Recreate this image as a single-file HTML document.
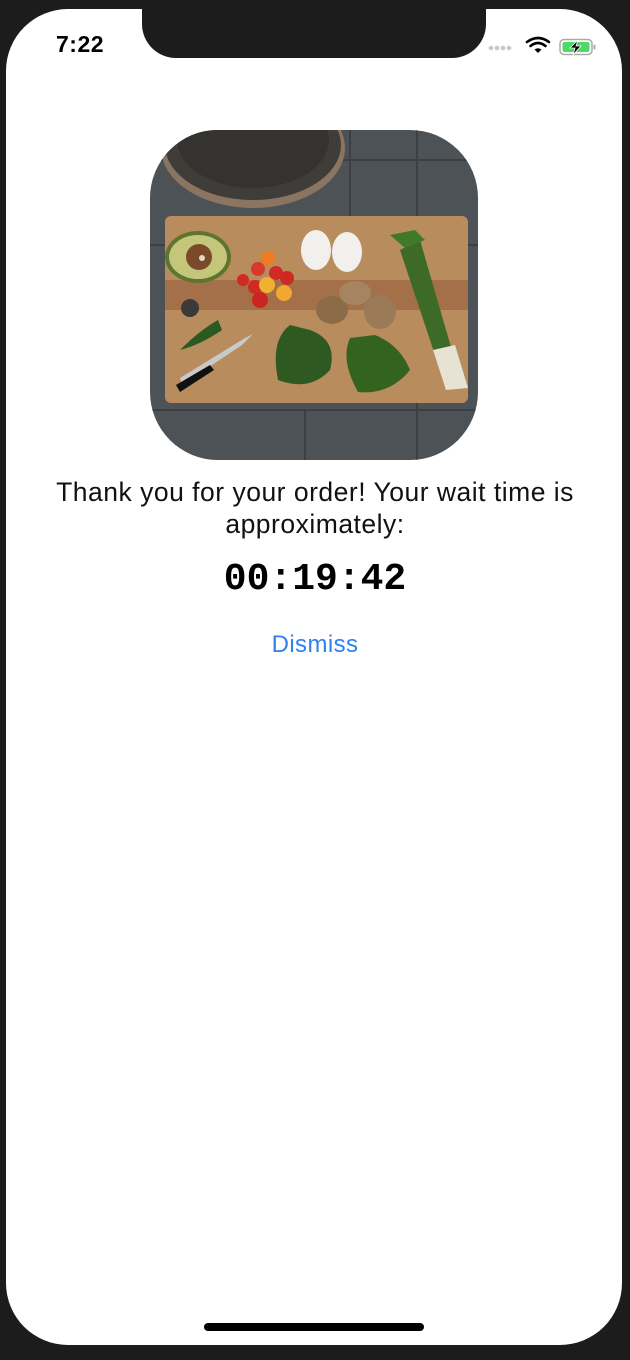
<!DOCTYPE html>
<html><head><meta charset="utf-8"><style>
html,body{margin:0;padding:0;background:#1c1c1c;}
body{width:630px;height:1360px;position:relative;overflow:hidden;font-family:"Liberation Sans",Arial,sans-serif;}
.screen{position:absolute;left:6px;top:9px;width:616px;height:1336px;background:#fff;border-radius:62px;overflow:hidden;}
.notch{position:absolute;left:142px;top:0;width:344px;height:58px;background:#1c1c1c;border-radius:0 0 34px 34px;}
.time{position:absolute;left:56px;top:31px;font-size:23px;font-weight:bold;color:#000;letter-spacing:0.5px;}
.msg{position:absolute;left:0;width:630px;top:476px;text-align:center;font-size:26.5px;line-height:32px;color:#111;letter-spacing:0.5px;}
.timer{position:absolute;left:0;width:630px;top:558px;text-align:center;font-family:"Liberation Mono",monospace;font-weight:bold;font-size:38px;color:#000;}
.dismiss{position:absolute;left:0;width:630px;top:631px;text-align:center;font-size:24px;color:#2f80f0;letter-spacing:0.4px;}
.home{position:absolute;left:204px;top:1323px;width:220px;height:8px;background:#000;border-radius:4px;}
</style></head><body>
<div class="screen"></div>
<div class="notch"></div>
<div class="time">7:22</div>
<svg style="position:absolute;left:486px;top:36px" width="115" height="22" viewBox="0 0 115 22">
<circle cx="5" cy="12" r="2.3" fill="#c8c8c8"/><circle cx="11" cy="12" r="2.3" fill="#c8c8c8"/><circle cx="17" cy="12" r="2.3" fill="#c8c8c8"/><circle cx="23" cy="12" r="2.3" fill="#c8c8c8"/>
<path d="M41 6 Q52 -2 63 6" stroke="#000" stroke-width="2.6" fill="none" stroke-linecap="round"/>
<path d="M44.5 10 Q52 4 59.5 10" stroke="#000" stroke-width="2.6" fill="none" stroke-linecap="round"/>
<path d="M48.5 13.5 L52 17 L55.5 13.5 Q52 11 48.5 13.5Z" fill="#000"/>
<rect x="74" y="3.5" width="32" height="15" rx="4" fill="none" stroke="#aaa" stroke-width="1.5"/>
<rect x="76.5" y="6" width="27" height="10" rx="2" fill="#4cd964"/>
<rect x="107.5" y="8.5" width="2" height="5" rx="1" fill="#aaa"/>
<path d="M92 4 L84 12 L89 12 L87 19 L95 10 L90 10 Z" fill="#000" stroke="#fff" stroke-width="0.8"/>
</svg>
<svg style="position:absolute;left:150px;top:130px" width="328" height="330" viewBox="0 0 328 330">
<defs><clipPath id="c"><rect width="328" height="330" rx="68"/></clipPath></defs>
<g clip-path="url(#c)">
<rect width="328" height="330" fill="#4d5257"/>
<g stroke="#3c4043" stroke-width="2" fill="none">
<path d="M0 115 H328 M0 280 H328 M200 0 V115 M155 280 V330 M267 0 V330 M0 30 H328"/>
</g>
<ellipse cx="103" cy="18" rx="92" ry="60" fill="#8b7560"/>
<ellipse cx="103" cy="15" rx="88" ry="55" fill="#3e3d3a"/>
<ellipse cx="103" cy="10" rx="76" ry="48" fill="#34332f"/>
<rect x="15" y="86" width="303" height="187" rx="6" fill="#b98c5e"/>
<rect x="15" y="150" width="303" height="30" fill="#a3704a"/>
<ellipse cx="48" cy="127" rx="33" ry="26" fill="#5e7530"/>
<ellipse cx="48" cy="127" rx="29" ry="22" fill="#c4c67a"/>
<circle cx="49" cy="127" r="13" fill="#7a4a2a"/>
<circle cx="52" cy="128" r="3" fill="#e8d5c0"/>
<circle cx="108" cy="139" r="7" fill="#d63a2a"/><circle cx="118" cy="128" r="7" fill="#f07a20"/><circle cx="126" cy="143" r="7" fill="#d02a25"/>
<circle cx="137" cy="148" r="7" fill="#cc2a20"/><circle cx="105" cy="157" r="7" fill="#d02a25"/><circle cx="110" cy="170" r="8" fill="#cc2520"/>
<circle cx="93" cy="150" r="6" fill="#d02a25"/><circle cx="134" cy="163" r="8" fill="#f0a830"/><circle cx="117" cy="155" r="8" fill="#f2b030"/>
<ellipse cx="166" cy="120" rx="15" ry="20" fill="#f2f0ec"/><ellipse cx="197" cy="122" rx="15" ry="20" fill="#f2f0ec"/>
<ellipse cx="182" cy="180" rx="16" ry="14" fill="#8b6b48"/><ellipse cx="205" cy="163" rx="16" ry="12" fill="#a58462"/>
<ellipse cx="230" cy="182" rx="16" ry="17" fill="#9b7a58"/>
<circle cx="40" cy="178" r="9" fill="#3a3a3a"/>
<path d="M30 220 Q50 200 68 190 L72 200 Q50 215 30 220Z" fill="#2a5a22"/>
<path d="M30 248 L95 208 L103 204 L92 215 L32 255Z" fill="#c9c9c9"/>
<path d="M26 255 L60 235 L64 240 L30 262Z" fill="#111"/>
<path d="M140 195 Q120 210 128 250 Q160 262 180 240 Q188 210 160 200Z" fill="#2e5a22"/>
<path d="M200 208 Q190 230 208 262 Q240 265 260 240 Q250 215 225 205Z" fill="#34621f"/>
<path d="M250 120 L295 255 L312 255 L270 110Z" fill="#3e6a28"/>
<path d="M283 220 L296 260 L318 258 L305 215Z" fill="#e6e2d4"/>
<path d="M240 105 l25 -5 l10 10 l-20 8Z" fill="#3f7a2a"/>
</g></svg>
<div class="msg">Thank you for your order! Your wait time is<br>approximately:</div>
<div class="timer">00:19:42</div>
<div class="dismiss">Dismiss</div>
<div class="home"></div>
</body></html>
